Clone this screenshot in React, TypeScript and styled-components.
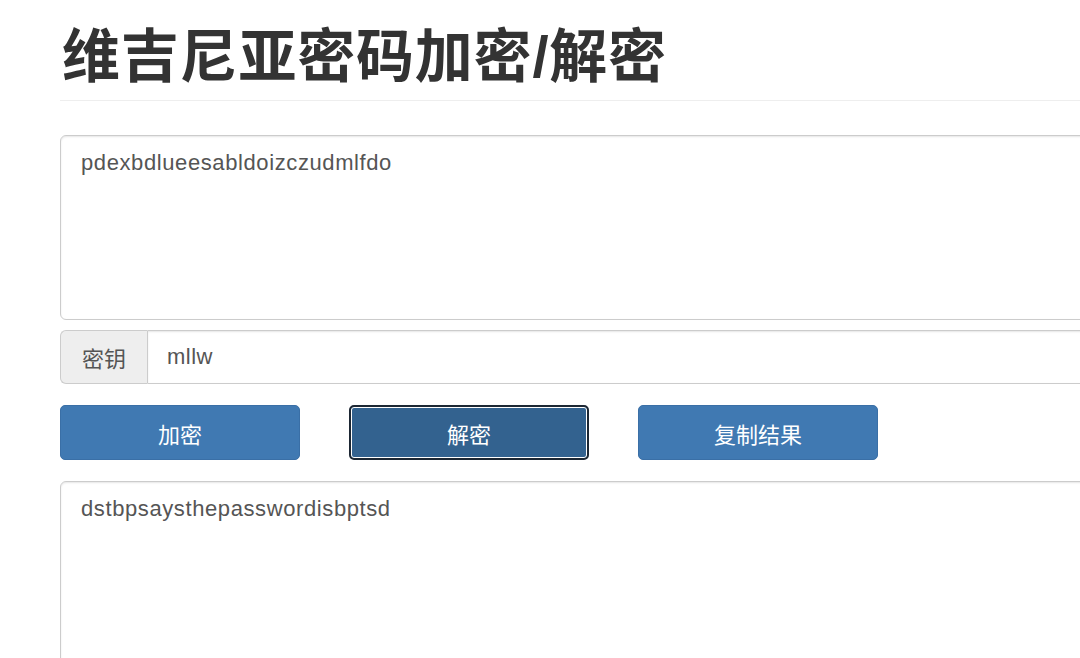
import * as React from 'react'
import styled, { createGlobalStyle } from 'styled-components'

const GlobalStyle = createGlobalStyle`
  html, body {
    margin: 0;
    padding: 0;
    overflow: hidden;
    background: #fff;
  }
  body {
    font-family: "Liberation Sans", "Noto Sans CJK SC", sans-serif;
    color: #333;
  }
`

const Page = styled.main`
  width: 1160px;
  padding: 0 0 0 60px;
`

const Title = styled.h1`
  margin: 0;
  padding: 20px 0 6px 2px;
  font-size: 58px;
  line-height: 74px;
  font-weight: 700;
  color: #333;
  border-bottom: 1px solid #eee;
  letter-spacing: 0.8px;
`

const TextBox = styled.textarea<{ $top: number }>`
  display: block;
  box-sizing: border-box;
  width: 100%;
  height: 185px;
  margin-top: ${p => p.$top}px;
  padding: 12px 20px;
  border: 1px solid #ccc;
  border-radius: 6px;
  box-shadow: inset 0 1px 2px rgba(0, 0, 0, 0.1);
  font-family: "Liberation Sans", "Noto Sans CJK SC", sans-serif;
  font-size: 22px;
  letter-spacing: 0.6px;
  line-height: 30px;
  color: #555;
  resize: none;
  outline: none;
`

const InputGroup = styled.div`
  display: flex;
  height: 54px;
  margin-top: 10px;
`

const Addon = styled.span`
  display: flex;
  align-items: center;
  justify-content: center;
  width: 87px;
  box-sizing: border-box;
  background: #eee;
  border: 1px solid #ccc;
  border-right: none;
  border-radius: 6px 0 0 6px;
  font-size: 22px;
  color: #555;
`

const KeyInput = styled.input`
  flex: 1;
  box-sizing: border-box;
  height: 100%;
  padding: 0 19px;
  border: 1px solid #ccc;
  border-radius: 0 6px 6px 0;
  box-shadow: inset 0 1px 2px rgba(0, 0, 0, 0.1);
  font-family: "Liberation Sans", "Noto Sans CJK SC", sans-serif;
  font-size: 22px;
  letter-spacing: 0.5px;
  color: #555;
  outline: none;
`

const ButtonRow = styled.div`
  display: flex;
  gap: 49px;
  margin-top: 21px;
`

const Button = styled.button<{ $active?: boolean }>`
  width: 240px;
  height: 55px;
  box-sizing: border-box;
  border: ${p => (p.$active ? '2px solid #1d2733' : '1px solid #3a6fa6')};
  border-radius: 5px;
  background: ${p => (p.$active ? '#33628f' : '#4079b2')};
  box-shadow: ${p => (p.$active ? 'inset 0 0 0 1px #fff' : 'none')};
  color: #fff;
  font-family: "Liberation Sans", "Noto Sans CJK SC", sans-serif;
  font-size: 22px;
  cursor: pointer;
  outline: none;
`

export default function App() {
  return (
    <Page>
      <GlobalStyle />
      <Title>维吉尼亚密码加密/解密</Title>
      <TextBox $top={34} defaultValue="pdexbdlueesabldoizczudmlfdo" />
      <InputGroup>
        <Addon>密钥</Addon>
        <KeyInput defaultValue="mllw" />
      </InputGroup>
      <ButtonRow>
        <Button>加密</Button>
        <Button $active>解密</Button>
        <Button>复制结果</Button>
      </ButtonRow>
      <TextBox $top={21} defaultValue="dstbpsaysthepasswordisbptsd" />
    </Page>
  )
}
